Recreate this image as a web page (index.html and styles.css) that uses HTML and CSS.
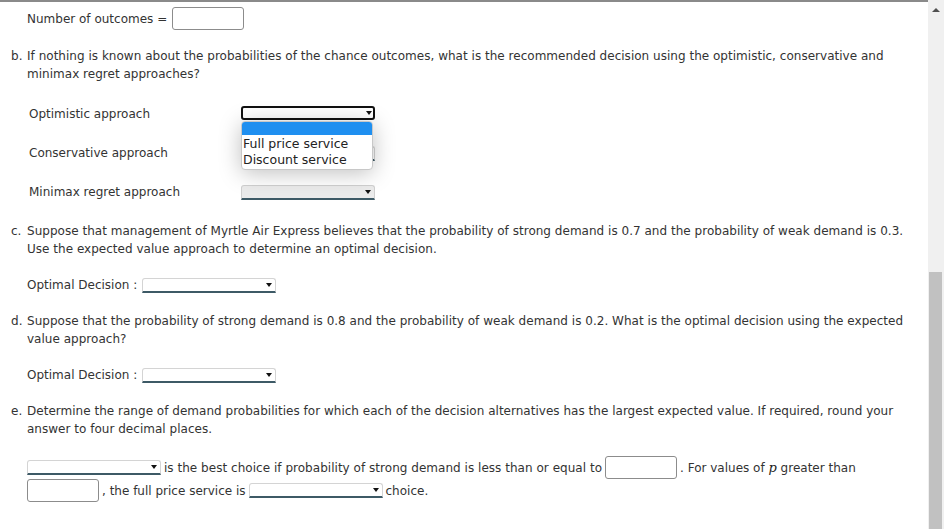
FILE: index.html
```html
<!DOCTYPE html>
<html>
<head>
<meta charset="utf-8">
<link rel="stylesheet" href="styles.css">
</head>
<body>
<div class="window">
  <main class="content">
    <div class="row outcomes">
      <span>Number of outcomes =</span>
      <span class="input"></span>
    </div>

    <div class="para p-b">
      <span class="letter">b.</span>
      <span class="ptext">If nothing is known about the probabilities of the chance outcomes, what is the recommended decision using the optimistic, conservative and minimax regret approaches?</span>
    </div>

    <div class="approaches">
      <div class="arow">
        <span class="alabel">Optimistic approach</span>
        <span class="selwrap">
          <span class="sel focused"><span class="arrow"></span></span>
          <span class="dropdown">
            <span class="opt hl"></span>
            <span class="opt">Full price service</span>
            <span class="opt">Discount service</span>
          </span>
        </span>
      </div>
      <div class="arow">
        <span class="alabel">Conservative approach</span>
        <span class="sel"><span class="arrow"></span></span>
      </div>
      <div class="arow">
        <span class="alabel">Minimax regret approach</span>
        <span class="sel shaded"><span class="arrow"></span></span>
      </div>
    </div>

    <div class="para p-c">
      <span class="letter">c.</span>
      <span class="ptext">Suppose that management of Myrtle Air Express believes that the probability of strong demand is 0.7 and the probability of weak demand is 0.3. Use the expected value approach to determine an optimal decision.</span>
    </div>

    <div class="row decision">
      <span>Optimal Decision :</span>
      <span class="sel"><span class="arrow"></span></span>
    </div>

    <div class="para p-d">
      <span class="letter">d.</span>
      <span class="ptext">Suppose that the probability of strong demand is 0.8 and the probability of weak demand is 0.2. What is the optimal decision using the expected value approach?</span>
    </div>

    <div class="row decision">
      <span>Optimal Decision :</span>
      <span class="sel"><span class="arrow"></span></span>
    </div>

    <div class="para p-e">
      <span class="letter">e.</span>
      <span class="ptext">Determine the range of demand probabilities for which each of the decision alternatives has the largest expected value. If required, round your answer to four decimal places.</span>
    </div>

    <div class="range">
      <div class="rline">
        <span class="sel"><span class="arrow"></span></span>
        <span class="t1">is the best choice if probability of strong demand is less than or equal to</span>
        <span class="input"></span>
        <span>. For values of <i class="math">p</i> greater than</span>
      </div>
      <div class="rline">
        <span class="input"></span>
        <span>, the full price service is</span>
        <span class="sel s2"><span class="arrow"></span></span>
        <span>choice.</span>
      </div>
    </div>
  </main>
  <aside class="scrollbar">
    <div class="sb-up"></div>
    <div class="sb-track"></div>
    <div class="sb-thumb"></div>
  </aside>
</div>
</body>
</html>
```

FILE: styles.css
```css
html, body {
  margin: 0;
  padding: 0;
  background: #fff;
}
body {
  font-family: "DejaVu Sans", Verdana, sans-serif;
  font-size: 12px;
  color: #333;
  width: 944px;
  height: 529px;
  overflow: hidden;
}
.window {
  display: flex;
  height: 529px;
}
.content {
  flex: 1;
  border-top: 2px solid #8a8a8a;
  padding: 5px 0 0 11px;
  box-sizing: border-box;
}
.row {
  display: flex;
  align-items: center;
}
.outcomes {
  height: 23px;
  padding-left: 16px;
  gap: 5px;
}
.input {
  display: inline-block;
  width: 70px;
  height: 21px;
  border: 1px solid #8c8c8c;
  border-radius: 3px;
  background: #fff;
  box-sizing: content-box;
}
.para {
  display: flex;
  line-height: 18px;
  letter-spacing: 0.02px;
}
.letter {
  width: 16px;
  flex: none;
}
.ptext {
  width: 884px;
}
.p-b { margin-top: 17px; }
.p-c { margin-top: 21px; }
.p-d { margin-top: 18px; }
.p-e { margin-top: 18px; }

.approaches {
  margin-top: 22px;
  padding-left: 18px;
  display: flex;
  flex-direction: column;
  gap: 21px;
}
.arow {
  display: flex;
  align-items: center;
  height: 18px;
}
.alabel {
  width: 212px;
}
.selwrap {
  position: relative;
  display: inline-block;
}
.sel {
  position: relative;
  display: inline-block;
  width: 132px;
  height: 12px;
  border: 1px solid #d4d4d4;
  border-bottom: 2px solid #3d5a66;
  border-radius: 3px 3px 0 0;
  background: #fff;
}
.sel.focused {
  border: 2px solid #111;
  border-radius: 3px;
  height: 10px;
  width: 130px;
}
.sel.shaded {
  background: #ebebeb;
  border-color: #d0d0d0 #d0d0d0 #3d5a66;
}
.arrow {
  position: absolute;
  right: 3px;
  top: 4px;
  width: 0;
  height: 0;
  border-left: 3px solid transparent;
  border-right: 3px solid transparent;
  border-top: 4px solid #111;
}
.sel.focused .arrow {
  right: 1px;
  top: 3px;
}
.dropdown {
  position: absolute;
  left: 0;
  top: 15px;
  width: 130px;
  background: #fff;
  border: 1px solid #c8c8c8;
  border-radius: 4px;
  box-shadow: 0 3px 22px rgba(0, 0, 0, 0.25);
  display: flex;
  flex-direction: column;
  padding-bottom: 1px;
  z-index: 2;
}
.opt {
  display: block;
  height: 16px;
  line-height: 16px;
  font-size: 12.5px;
  color: #222;
  padding-left: 1px;
  white-space: nowrap;
}
.opt.hl {
  height: 13px;
  background: #1f8ff0;
  border-radius: 3px 3px 0 0;
  margin-bottom: 1px;
}

.decision {
  margin-top: 18px;
  padding-left: 16px;
  height: 18px;
  gap: 5px;
}

.range {
  margin-top: 18px;
  padding-left: 16px;
  display: flex;
  flex-direction: column;
}
.rline {
  display: flex;
  align-items: center;
  height: 23px;
}
.rline .t1 {
  margin: 0 3px 0 3px;
  letter-spacing: 0.03px;
}
.rline .s2 {
  margin: 0 3px 0 3px;
}
.rline .input + span {
  margin-left: 3px;
}
.math {
  font-family: "DejaVu Serif", "Liberation Serif", serif;
  font-style: italic;
  font-size: 13px;
  color: #222;
}

.scrollbar {
  width: 16px;
  flex: none;
  background: #f0f0f0;
  display: flex;
  flex-direction: column;
  align-items: center;
  position: relative;
}
.sb-up {
  margin-top: 8px;
  width: 0;
  height: 0;
  border-left: 4px solid transparent;
  border-right: 4px solid transparent;
  border-bottom: 4px solid #505050;
}
.sb-track {
  height: 260px;
}
.sb-thumb {
  width: 13px;
  flex: 1;
  background: #c1c1c1;
  margin-left: -1px;
}
```
